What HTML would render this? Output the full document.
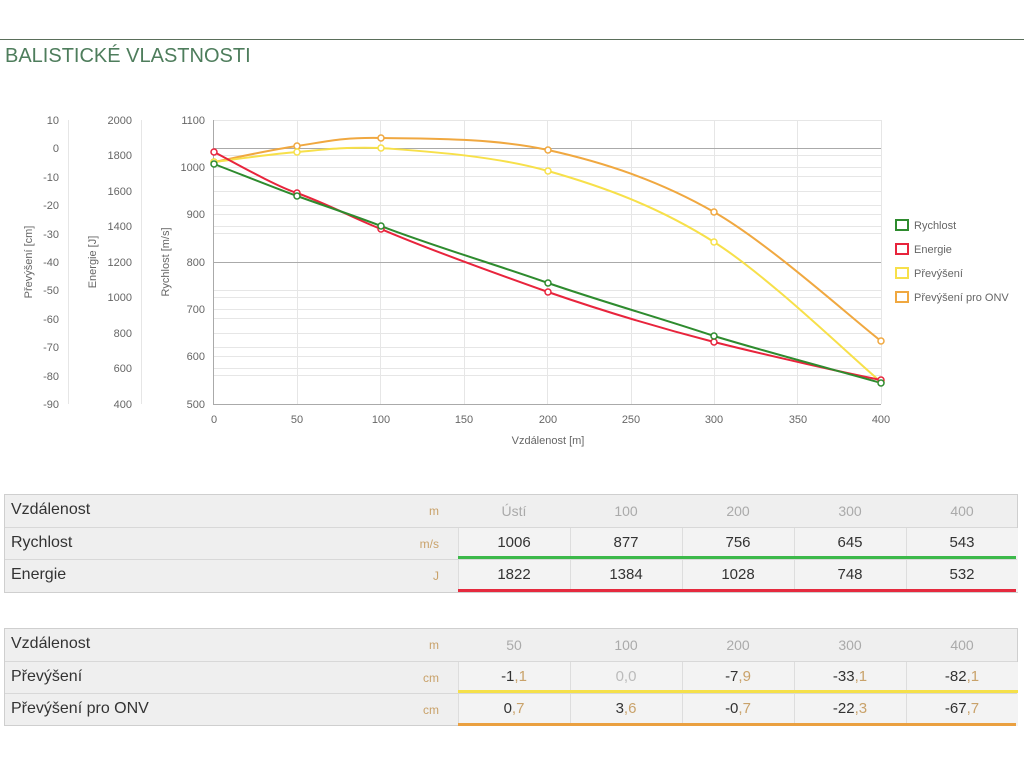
<!DOCTYPE html>
<html><head><meta charset="utf-8"><style>
body{margin:0;width:1024px;height:768px;background:#fff;font-family:"Liberation Sans",sans-serif;position:relative;overflow:hidden}
.hr{position:absolute;left:0;top:39px;width:1024px;height:1px;background:#5a6e5a}
h1{position:absolute;left:5px;top:45px;margin:0;font-weight:normal;font-size:20px;color:#4e7d5c;letter-spacing:0}
.t{position:absolute;left:4px;width:1012px;border:1px solid #cfcfcf;background:#efefef}
.r{position:absolute;left:0;width:1012px;height:32px;border-top:1px solid #d8d8d8;box-sizing:border-box}
.r:first-child{border-top:none}
.lb{position:absolute;left:6px;top:6px;font-size:16px;color:#333}
.u{position:absolute;left:394px;width:40px;text-align:right;top:9px;font-size:12px;color:#c9a26a}
.c{position:absolute;width:112px;text-align:center;top:6px;font-size:15px;color:#333;height:32px;box-sizing:border-box}
.h .c{color:#aaa;font-size:14px;top:8px}
.v{position:absolute;top:0;height:32px;width:111px;background:#f3f3f3;border-left:1px solid #ddd}
.bar{position:absolute;height:3px;width:111px}
.d{color:#c9a26a}
svg text{font-family:"Liberation Sans",sans-serif;font-size:11px;fill:#666}
</style></head><body>
<div class="hr"></div>
<h1>BALISTICKÉ VLASTNOSTI</h1>
<svg width="1024" height="470" style="position:absolute;left:0;top:0">
<g stroke="#e6e6e6" stroke-width="1">
<line x1="214" x2="881" y1="120.5" y2="120.5"/><line x1="214" x2="881" y1="155.5" y2="155.5"/><line x1="214" x2="881" y1="167.5" y2="167.5"/><line x1="214" x2="881" y1="176.5" y2="176.5"/><line x1="214" x2="881" y1="191.5" y2="191.5"/><line x1="214" x2="881" y1="205.5" y2="205.5"/><line x1="214" x2="881" y1="214.5" y2="214.5"/><line x1="214" x2="881" y1="226.5" y2="226.5"/><line x1="214" x2="881" y1="233.5" y2="233.5"/><line x1="214" x2="881" y1="290.5" y2="290.5"/><line x1="214" x2="881" y1="297.5" y2="297.5"/><line x1="214" x2="881" y1="309.5" y2="309.5"/><line x1="214" x2="881" y1="318.5" y2="318.5"/><line x1="214" x2="881" y1="333.5" y2="333.5"/><line x1="214" x2="881" y1="347.5" y2="347.5"/><line x1="214" x2="881" y1="356.5" y2="356.5"/><line x1="214" x2="881" y1="368.5" y2="368.5"/><line x1="214" x2="881" y1="375.5" y2="375.5"/>
<line y1="120" y2="404" x1="297.5" x2="297.5"/><line y1="120" y2="404" x1="380.5" x2="380.5"/><line y1="120" y2="404" x1="464.5" x2="464.5"/><line y1="120" y2="404" x1="547.5" x2="547.5"/><line y1="120" y2="404" x1="631.5" x2="631.5"/><line y1="120" y2="404" x1="714.5" x2="714.5"/><line y1="120" y2="404" x1="797.5" x2="797.5"/><line y1="120" y2="404" x1="881.5" x2="881.5"/>
<line x1="68.5" x2="68.5" y1="120" y2="404"/><line x1="141.5" x2="141.5" y1="120" y2="404"/>
</g>
<g stroke="#aaa"><line x1="214" x2="881" y1="148.5" y2="148.5"/><line x1="214" x2="881" y1="262.5" y2="262.5"/><line x1="214" x2="881" y1="404.5" y2="404.5"/><line x1="213.5" x2="213.5" y1="120" y2="405"/></g>
<g text-anchor="end">
<text x="59" y="124">10</text><text x="59" y="152">0</text><text x="59" y="181">-10</text><text x="59" y="209">-20</text><text x="59" y="238">-30</text><text x="59" y="266">-40</text><text x="59" y="294">-50</text><text x="59" y="323">-60</text><text x="59" y="351">-70</text><text x="59" y="380">-80</text><text x="59" y="408">-90</text>
<text x="132" y="124">2000</text><text x="132" y="159">1800</text><text x="132" y="195">1600</text><text x="132" y="230">1400</text><text x="132" y="266">1200</text><text x="132" y="301">1000</text><text x="132" y="337">800</text><text x="132" y="372">600</text><text x="132" y="408">400</text>
<text x="205" y="124">1100</text><text x="205" y="171">1000</text><text x="205" y="218">900</text><text x="205" y="266">800</text><text x="205" y="313">700</text><text x="205" y="360">600</text><text x="205" y="408">500</text>
</g>
<g text-anchor="middle"><text x="214" y="423">0</text><text x="297" y="423">50</text><text x="381" y="423">100</text><text x="464" y="423">150</text><text x="548" y="423">200</text><text x="631" y="423">250</text><text x="714" y="423">300</text><text x="798" y="423">350</text><text x="881" y="423">400</text>
<text x="548" y="444">Vzdálenost [m]</text>
<text transform="translate(32,262) rotate(-90)">Převýšení [cm]</text>
<text transform="translate(96,262) rotate(-90)">Energie [J]</text>
<text transform="translate(169,262) rotate(-90)">Rychlost [m/s]</text></g>
<g fill="none" stroke-width="2">
<path stroke="#f0a840" d="M214,162 C228,159.3 269,150 297,146 C325,142 339,137.3 381,138 C423,138.7 492.5,137.7 548,150 C603.5,162.3 658.5,180.2 714,212 C769.5,243.8 853,319.5 881,341"/>
<path stroke="#f7e04a" d="M214,162 C228,160.3 269,154.3 297,152 C325,149.7 339,147 381,148 C423,151.2 492.5,155.3 548,171 C603.5,186.7 658.5,206.8 714,242 C769.5,277.2 853,358.7 881,382"/>
<path stroke="#e8243c" d="M214,152 C228,159 275,186 297,193 C330,205 355,219 381,229 C430,250 500,275 548,292 C600,310 660,328 714,342 C770,356 850,374 881,380"/>
<path stroke="#2e8b2e" d="M214,164 C240,174 275,188 297,196 C325,206 355,216 381,226 C430,245 500,266 548,283 C600,301 660,318 714,336 C770,353 850,374 881,383"/>
</g>
<g fill="#fff" stroke-width="1.5">
<g stroke="#f0a840"><circle cx="214" cy="162" r="3"/><circle cx="297" cy="146" r="3"/><circle cx="381" cy="138" r="3"/><circle cx="548" cy="150" r="3"/><circle cx="714" cy="212" r="3"/><circle cx="881" cy="341" r="3"/></g>
<g stroke="#f7e04a"><circle cx="214" cy="162" r="3"/><circle cx="297" cy="152" r="3"/><circle cx="381" cy="148" r="3"/><circle cx="548" cy="171" r="3"/><circle cx="714" cy="242" r="3"/><circle cx="881" cy="382" r="3"/></g>
<g stroke="#e8243c"><circle cx="214" cy="152" r="3"/><circle cx="297" cy="193" r="3"/><circle cx="381" cy="229" r="3"/><circle cx="548" cy="292" r="3"/><circle cx="714" cy="342" r="3"/><circle cx="881" cy="380" r="3"/></g>
<g stroke="#2e8b2e"><circle cx="214" cy="164" r="3"/><circle cx="297" cy="196" r="3"/><circle cx="381" cy="226" r="3"/><circle cx="548" cy="283" r="3"/><circle cx="714" cy="336" r="3"/><circle cx="881" cy="383" r="3"/></g>
</g>
<g stroke-width="2" fill="#fff">
<rect x="896" y="220" width="12" height="10" stroke="#2e8b2e"/><rect x="896" y="244" width="12" height="10" stroke="#e8243c"/><rect x="896" y="268" width="12" height="10" stroke="#f7e04a"/><rect x="896" y="292" width="12" height="10" stroke="#f0a840"/></g>
<text x="914" y="229">Rychlost</text><text x="914" y="253">Energie</text><text x="914" y="277">Převýšení</text><text x="914" y="301">Převýšení pro ONV</text>
</svg>

<div class="t" style="top:494px;height:97px">
 <div class="r h" style="top:0"><span class="lb">Vzdálenost</span><span class="u">m</span>
  <span class="c" style="left:453px">Ústí</span><span class="c" style="left:565px">100</span><span class="c" style="left:677px">200</span><span class="c" style="left:789px">300</span><span class="c" style="left:901px">400</span></div>
 <div class="r" style="top:32px"><span class="lb">Rychlost</span><span class="u">m/s</span>
  <div class="v" style="left:453px"></div><div class="v" style="left:565px"></div><div class="v" style="left:677px"></div><div class="v" style="left:789px"></div><div class="v" style="left:901px"></div>
  <span class="c" style="left:453px">1006</span><span class="c" style="left:565px">877</span><span class="c" style="left:677px">756</span><span class="c" style="left:789px">645</span><span class="c" style="left:901px">543</span>
  <div class="bar" style="left:453px;top:28px;width:558px;background:#3cb94a"></div></div>
 <div class="r" style="top:64px;height:33px"><span class="lb">Energie</span><span class="u">J</span>
  <div class="v" style="left:453px"></div><div class="v" style="left:565px"></div><div class="v" style="left:677px"></div><div class="v" style="left:789px"></div><div class="v" style="left:901px"></div>
  <span class="c" style="left:453px">1822</span><span class="c" style="left:565px">1384</span><span class="c" style="left:677px">1028</span><span class="c" style="left:789px">748</span><span class="c" style="left:901px">532</span>
  <div class="bar" style="left:453px;top:29px;width:558px;background:#e52a3e"></div></div>
</div>

<div class="t" style="top:628px;height:96px">
 <div class="r h" style="top:0"><span class="lb">Vzdálenost</span><span class="u">m</span>
  <span class="c" style="left:453px">50</span><span class="c" style="left:565px">100</span><span class="c" style="left:677px">200</span><span class="c" style="left:789px">300</span><span class="c" style="left:901px">400</span></div>
 <div class="r" style="top:32px"><span class="lb">Převýšení</span><span class="u">cm</span>
  <div class="v" style="left:453px"></div><div class="v" style="left:565px"></div><div class="v" style="left:677px"></div><div class="v" style="left:789px"></div><div class="v" style="left:901px"></div>
  <span class="c" style="left:453px">-1<span class="d">,1</span></span><span class="c" style="left:565px;color:#bbb">0,0</span><span class="c" style="left:677px">-7<span class="d">,9</span></span><span class="c" style="left:789px">-33<span class="d">,1</span></span><span class="c" style="left:901px">-82<span class="d">,1</span></span>
  <div class="bar" style="left:453px;top:28px;width:560px;background:#f5e04a"></div></div>
 <div class="r" style="top:64px"><span class="lb">Převýšení pro ONV</span><span class="u">cm</span>
  <div class="v" style="left:453px"></div><div class="v" style="left:565px"></div><div class="v" style="left:677px"></div><div class="v" style="left:789px"></div><div class="v" style="left:901px"></div>
  <span class="c" style="left:453px">0<span class="d">,7</span></span><span class="c" style="left:565px">3<span class="d">,6</span></span><span class="c" style="left:677px">-0<span class="d">,7</span></span><span class="c" style="left:789px">-22<span class="d">,3</span></span><span class="c" style="left:901px">-67<span class="d">,7</span></span>
  <div class="bar" style="left:453px;top:29px;width:558px;background:#eaa040"></div></div>
</div>
</body></html>
